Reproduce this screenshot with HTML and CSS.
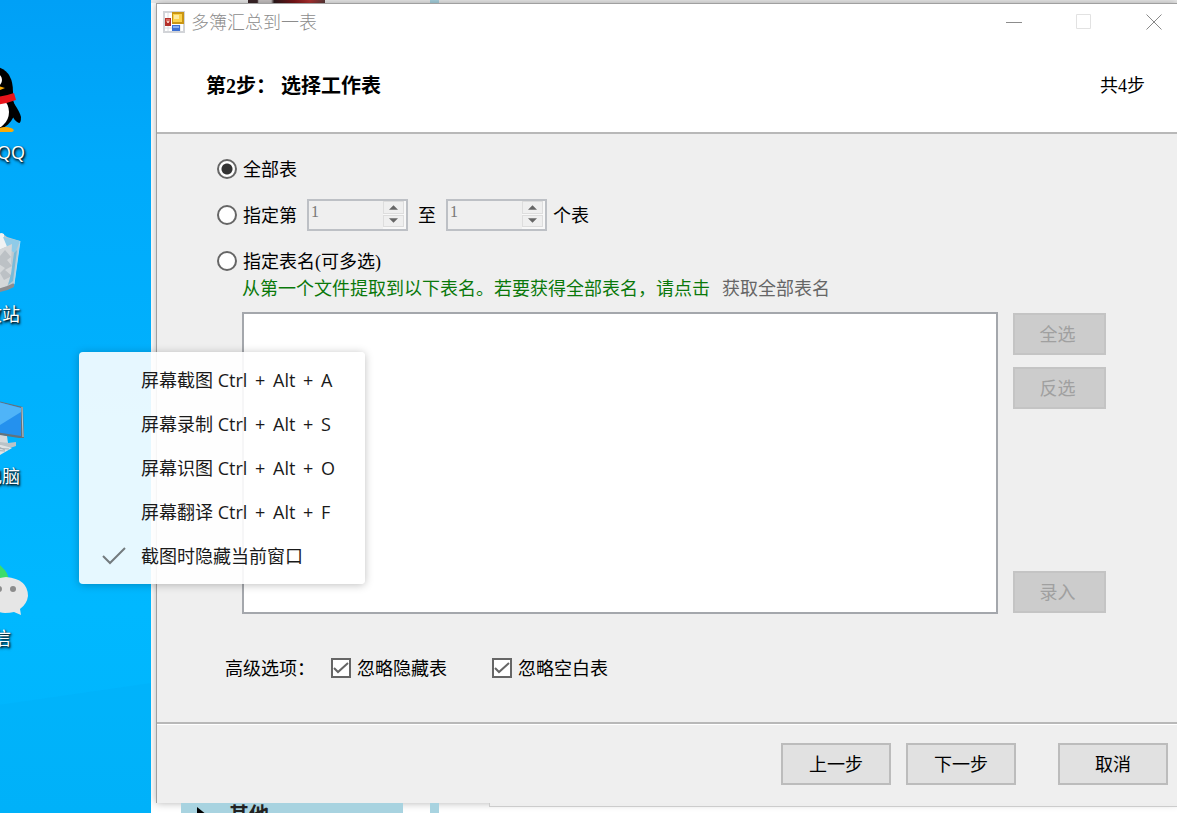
FILE: index.html
```html
<!DOCTYPE html>
<html lang="zh-CN">
<head>
    <meta charset="UTF-8">
    <meta name="viewport" content="width=device-width, initial-scale=1.0">
    <title>多簿汇总到一表</title>
    <link rel="stylesheet" href="styles.css">
</head>
<body>
    <div class="desktop">
        <aside class="icons">
            <svg class="beam" viewBox="0 0 151 120" preserveAspectRatio="none" aria-hidden="true">
                <path d="M0 20L151 0V120H0z" fill="#00a8f0" opacity=".22"/>
            </svg>
            <div class="icon-list">
                <div class="icon">
                    <svg viewBox="0 0 72 72">
                        <path d="M14 40L4 50Q1 58 4 60Q8 58 12 50z"/>
                        <path d="M56 38Q63 48 64 53Q64 59 62 59Q57 57 54 49z"/>
                        <ellipse cx="34" cy="45" rx="24" ry="22"/>
                        <path d="M12 34V24Q13 2 34 2Q56 3 56 28V42z"/>
                        <ellipse cx="33" cy="48" rx="19" ry="18" fill="#fff"/>
                        <path d="M11 31Q34 37 57 29L59 36Q35 45 9 38z" fill="#e8141b"/>
                        <ellipse cx="27" cy="16" rx="4" ry="6" fill="#fff"/>
                        <ellipse cx="40" cy="16" rx="5" ry="6" fill="#fff"/>
                        <circle cx="40" cy="17" r="2"/>
                        <path d="M20 24Q34 19 48 24Q36 30 20 24z" fill="#faab07"/>
                        <path d="M36 67Q46 61 54 64Q59 66 55 68H34zM12 68Q10 64 20 63L32 68z" fill="#faab07"/>
                    </svg>
                    <span class="icon-name">腾讯QQ</span>
                </div>
                <div class="icon">
                    <svg viewBox="0 0 72 72">
                        <path d="M10 15L26 8L34 12L45 7L50 11L63 15L57 60Q36 70 17 60z" fill="#bfc9cf"/>
                        <path d="M12 18L34 12L44 7L47 8V13L61 16L44 23L26 22z" fill="#f1f3f4"/>
                        <path d="M46 11L63 15L58 27L51 23z" fill="#8fcbe8"/>
                        <path d="M14 24L44 23L55 18L54 36L56 47L50 60L36 65L18 60z" fill="#d4d7d9"/>
                        <path d="M43 30L48 24L54 31L50 34L55 40L48 44L55 50L47 54L43 47L48 42L42 38z" fill="#bcc1c5"/>
                        <path d="M57 27L60 24L56 55L51 59L54 48z" fill="#79bbd8"/>
                        <path d="M17 60Q36 68 57 57V61Q40 71 17 63z" fill="#8d8d90"/>
                        <path d="M63 15L57 58" stroke="#a9dcf4" fill="none"/>
                    </svg>
                    <span class="icon-name">回收站</span>
                </div>
                <div class="icon">
                    <svg viewBox="0 0 72 72">
                        <path d="M32 53L43 52L51 55L59 54V58L47 62L32 60z" fill="#b9c3c8"/>
                        <path d="M42 46L50 48L51 55L42 54z" fill="#d5dadd"/>
                        <path d="M4 8L41 13L66 19L67 50L62 50L4 41z" fill="#64737c"/>
                        <path d="M4 9L41 14L64 20V48L4 39z" fill="#2491ee"/>
                        <path d="M4 9L41 14L64 20V24L38 40L4 36z" fill="#4fb4f8"/>
                        <path d="M65 19L66 49" stroke="#bdc8ce" fill="none"/>
                        <path d="M20 59L44 57L55 60L43 67L20 64z" fill="#dfe4e6"/>
                        <path d="M30 60L52 61M30 62L48 63M40 58L48 62" stroke="#a4afb5" fill="none"/>
                    </svg>
                    <span class="icon-name">此电脑</span>
                </div>
                <div class="icon">
                    <svg viewBox="0 0 72 72">
                        <ellipse cx="26" cy="32" rx="26" ry="22" fill="#3ddc6b"/>
                        <path d="M49 27Q71 29 71 46Q70 54 63 59L64 65L57 62Q53 63 48 63Q28 61 28 45Q29 29 49 27z" fill="#e6e6e6"/>
                        <circle cx="42" cy="39" r="3" fill="#8c8c8c"/>
                        <circle cx="56" cy="39" r="3" fill="#8c8c8c"/>
                    </svg>
                    <span class="icon-name">微信</span>
                </div>
            </div>
        </aside>

        <main class="workspace">
            <div class="sheet-top">
                <span class="sheet-photo"></span>
                <span class="sheet-bar"></span>
            </div>

            <form class="dialog">
                <div class="titlebar">
                    <svg class="app-icon" viewBox="0 0 22 22" aria-hidden="true">
                        <path d="M1 1h20v20H1z" fill="#fff" stroke="#d2d4d8" stroke-width="2"/>
                        <path d="M5 2v18M2 17h8M17 14v6" stroke="#dcdee2"/>
                        <path d="M2 7h6v8H2z" fill="#b3302a"/>
                        <path d="M3 8h4v3H3z" fill="#d9685c"/>
                        <path d="M4 10h2v2H4z" fill="#f6c1b8"/>
                        <path d="M9 1h12v12H9z" fill="#c99513"/>
                        <path d="M10 3h9v8h-9z" fill="#fbd24b"/>
                        <path d="M11 4h5v4h-5z" fill="#fdeaa0"/>
                        <path d="M9 14h8v6H9z" fill="#3c6fd3"/>
                        <path d="M10 15h6v2h-6z" fill="#86adf2"/>
                    </svg>
                    <span class="title">多簿汇总到一表</span>
                    <div class="window-controls">
                        <button type="button" aria-label="最小化"><svg viewBox="0 0 16 16"><path d="M0 8.5h16" stroke="#8c8c8c"/></svg></button>
                        <button type="button" aria-label="最大化" disabled><svg viewBox="0 0 16 16"><path d="M.5.5h14v14H.5z" stroke="#e2e2e2"/></svg></button>
                        <button type="button" aria-label="关闭"><svg viewBox="0 0 16 16"><path d="M.5.5l15 15M15.5.5l-15 15" stroke="#888"/></svg></button>
                    </div>
                </div>

                <div class="header">
                    <h1>第2步： 选择工作表</h1>
                    <span class="steps">共4步</span>
                </div>

                <div class="content">
                    <div class="row">
                        <input type="radio" name="range" id="rangeAll" checked>
                        <label for="rangeAll">全部表</label>
                    </div>
                    <div class="row">
                        <input type="radio" name="range" id="rangeIndex">
                        <label for="rangeIndex">指定第</label>
                        <span class="spinner">
                            <input type="text" value="1" aria-label="起始表" disabled>
                            <span class="spinner-buttons">
                                <button type="button" aria-label="增加" disabled><svg viewBox="0 0 8 4"><path d="M4 0l4 4H0z"/></svg></button>
                                <button type="button" aria-label="减少" disabled><svg viewBox="0 0 8 4"><path d="M0 0h8L4 4z"/></svg></button>
                            </span>
                        </span>
                        <span class="to">至</span>
                        <span class="spinner">
                            <input type="text" value="1" aria-label="结束表" disabled>
                            <span class="spinner-buttons">
                                <button type="button" aria-label="增加" disabled><svg viewBox="0 0 8 4"><path d="M4 0l4 4H0z"/></svg></button>
                                <button type="button" aria-label="减少" disabled><svg viewBox="0 0 8 4"><path d="M0 0h8L4 4z"/></svg></button>
                            </span>
                        </span>
                        <span class="unit">个表</span>
                    </div>
                    <div class="row">
                        <input type="radio" name="range" id="rangeName">
                        <label for="rangeName">指定表名(可多选)</label>
                    </div>
                    <p class="hint">从第一个文件提取到以下表名。若要获得全部表名，请点击<a href="#">获取全部表名</a></p>

                    <div class="names">
                        <select multiple class="name-list" aria-label="表名"></select>
                        <div class="name-actions">
                            <button type="button" class="btn" disabled>全选</button>
                            <button type="button" class="btn" disabled>反选</button>
                            <button type="button" class="btn enter-btn" disabled>录入</button>
                        </div>
                    </div>

                    <div class="row options">
                        <span class="options-title">高级选项：</span>
                        <input type="checkbox" id="skipHidden" checked>
                        <label for="skipHidden">忽略隐藏表</label>
                        <input type="checkbox" id="skipEmpty" checked>
                        <label for="skipEmpty">忽略空白表</label>
                    </div>
                </div>

                <div class="footer">
                    <button type="button" class="btn">上一步</button>
                    <button type="button" class="btn">下一步</button>
                    <button type="button" class="btn cancel-btn">取消</button>
                </div>
            </form>

            <div class="sheet-bottom">
                <div class="sheet-group"><span class="arrow"></span>其他</div>
                <span class="sheet-bar"></span>
                <span class="sheet-scroll"></span>
            </div>
        </main>

        <div class="menu">
            <button type="button">屏幕截图 <kbd>Ctrl</kbd> + <kbd>Alt</kbd> + <kbd>A</kbd></button>
            <button type="button">屏幕录制 <kbd>Ctrl</kbd> + <kbd>Alt</kbd> + <kbd>S</kbd></button>
            <button type="button">屏幕识图 <kbd>Ctrl</kbd> + <kbd>Alt</kbd> + <kbd>O</kbd></button>
            <button type="button">屏幕翻译 <kbd>Ctrl</kbd> + <kbd>Alt</kbd> + <kbd>F</kbd></button>
            <label><input type="checkbox" checked>截图时隐藏当前窗口</label>
        </div>
    </div>
</body>
</html>
```
FILE: styles.css
```css
* {
    margin: 0;
    padding: 0;
    box-sizing: border-box;
}

body {
    font-family: "Liberation Serif", "Noto Sans CJK SC", sans-serif;
    font-size: 18px;
    line-height: 24px;
    color: #000;
}

button,
input,
select {
    font: inherit;
    color: inherit;
}

.desktop {
    position: relative;
    display: grid;
    grid-template-columns: 151px 1fr;
    min-height: 100vh;
    overflow: hidden;
}

/* desktop icons */
.icons {
    position: relative;
    overflow: hidden;
    background: linear-gradient(#00a0f6, #00aafb 20%, #00b8ff 75%, #00b4fc);
}

.beam {
    position: absolute;
    left: 0;
    bottom: 0;
    width: 100%;
    height: 130px;
}

.icon-list {
    position: relative;
    display: flex;
    flex-direction: column;
    gap: 62px;
    width: 120px;
    margin-left: -67px;
    padding-top: 64px;
}

.icon {
    display: flex;
    flex-direction: column;
    align-items: center;
    gap: 4px;
}

.icon svg {
    width: 72px;
    height: 72px;
}

.icon-name {
    font-family: "Open Sans", "Noto Sans CJK SC", sans-serif;
    color: #fff;
    text-shadow: 1px 1px 2px #000, 1px 2px 3px rgba(0, 0, 0, 0.7);
}

/* window behind the dialog */
.workspace {
    display: flex;
    flex-direction: column;
    min-width: 0;
    background: #fff;
    box-shadow: 0 0 12px rgba(0, 0, 0, 0.5);
}

.sheet-top {
    display: flex;
    height: 3px;
    padding-left: 97px;
    background: #ebebeb;
}

.sheet-photo {
    width: 77px;
    margin-right: 105px;
    background: linear-gradient(90deg, #3a2528 12%, #c8c4c4 14% 30%, #2c1a1c 34%, #7c1418 60%, #b03030 80%, #5a3a3a);
}

.sheet-bar {
    width: 9px;
    background: #a8d3e0;
}

.sheet-bottom {
    display: flex;
    height: 10px;
    padding-left: 30px;
    overflow: hidden;
}

.sheet-group {
    display: flex;
    width: 222px;
    height: 24px;
    margin-right: 27px;
    padding-left: 16px;
    background: #a8d3e0;
    color: #222;
    font-size: 20px;
    font-weight: bold;
}

.arrow {
    width: 10px;
    height: 16px;
    margin: 4px 22px 0 0;
    background: #000;
    clip-path: polygon(0 0, 100% 50%, 0 100%);
}

.sheet-scroll {
    flex: 1;
    height: 4px;
    margin-left: 50px;
    background: #eee;
    border: solid #ccc;
    border-width: 0 0 1px 1px;
}

/* dialog */
.dialog {
    flex: 1;
    display: flex;
    flex-direction: column;
    margin-left: 5px;
    background: #efefef;
    border: solid #a0a0a0;
    border-width: 1px 0 0 1px;
    box-shadow: 0 0 8px rgba(0, 0, 0, 0.3);
}

.titlebar {
    display: flex;
    align-items: center;
    height: 36px;
    padding-left: 6px;
    background: #fff;
}

.app-icon {
    width: 22px;
    height: 22px;
    margin-right: 6px;
}

.title {
    padding-top: 2px;
    color: #8c8c8c;
    font-weight: 300;
}

.window-controls {
    display: flex;
    gap: 23px;
    margin-left: auto;
}

.window-controls button {
    display: flex;
    align-items: center;
    justify-content: center;
    width: 47px;
    height: 36px;
    background: none;
    border: none;
}

.window-controls svg {
    width: 16px;
    height: 16px;
    fill: none;
}

.header {
    display: flex;
    align-items: center;
    justify-content: space-between;
    height: 94px;
    padding: 0 32px 0 49px;
    background: #fff;
    border-bottom: 2px solid #b8b8b8;
}

h1 {
    font-size: 20px;
    font-weight: bold;
}

.content {
    flex: 1;
    display: flex;
    flex-direction: column;
    padding: 19px 71px 38px 60px;
}

.row {
    display: flex;
    align-items: center;
    height: 32px;
    margin-bottom: 14px;
}

.row input[type="radio"],
.row input[type="checkbox"] {
    appearance: none;
    flex: none;
    width: 20px;
    height: 20px;
    margin-right: 6px;
    background: #fff;
    border: 2px solid #666;
}

.row input[type="radio"] {
    border-radius: 50%;
}

.row input[type="radio"]:checked {
    background: radial-gradient(circle, #333 5px, #fff 6px);
}

.row input[type="checkbox"]:checked {
    background: #fff url("data:image/svg+xml,%3Csvg xmlns='http://www.w3.org/2000/svg' viewBox='0 0 16 16'%3E%3Cpath d='M1 8l4 4L15 3' fill='none' stroke='%23666' stroke-width='2'/%3E%3C/svg%3E");
}

.row label,
.to,
.unit,
.options-title {
    padding-top: 2px;
}

.spinner {
    display: flex;
    width: 101px;
    height: 32px;
    margin-left: 10px;
    border: 2px solid #bdc0c5;
}

.spinner input {
    flex: 1;
    min-width: 0;
    height: 22px;
    padding-left: 2px;
    background: none;
    border: none;
    color: #777;
    font-size: 16px;
}

.spinner-buttons {
    display: flex;
    flex-direction: column;
    gap: 1px;
    width: 23px;
    padding: 0 2px 2px 0;
    background: #f8f8f8;
}

.spinner-buttons button {
    flex: 1;
    display: flex;
    align-items: center;
    justify-content: center;
    background: #efefef;
    border: 1px solid #ddd;
}

.spinner-buttons svg {
    width: 9px;
    height: 5px;
    fill: #666;
}

.to {
    margin-left: 10px;
}

.unit {
    margin-left: 6px;
}

.row + .hint {
    margin-top: -14px;
}

.hint {
    padding-left: 25px;
    color: #0a780a;
}

.hint a {
    margin-left: 12px;
    color: #666;
    text-decoration: none;
}

.names {
    flex: 1;
    display: flex;
    gap: 15px;
    margin: 11px 0 38px 25px;
}

.name-list {
    flex: 1;
    min-width: 0;
    background: #fff;
    border: 2px solid #a4a7ac;
    border-radius: 0;
}

.name-actions {
    display: flex;
    flex-direction: column;
    gap: 12px;
    padding: 1px 0;
}

.btn {
    width: 110px;
    height: 42px;
    padding-top: 2px;
    background: #e1e1e1;
    border: 2px solid #bcbcbc;
}

.btn:disabled {
    width: 93px;
    padding-right: 4px;
    background: #ccc;
    border-color: #c4c4c4;
    color: #a0a0a0;
}

.enter-btn {
    margin-top: auto;
}

.options {
    margin-bottom: 0;
    padding-left: 8px;
}

.options-title {
    margin-right: 16px;
}

.options label {
    margin-right: 45px;
}

.footer {
    display: flex;
    justify-content: flex-end;
    gap: 15px;
    padding: 19px 9px 18px;
    border-top: 2px solid #b8b8b8;
    box-shadow: inset 0 1px #fff;
}

.cancel-btn {
    margin-left: 27px;
}

/* screenshot menu floating over everything */
.menu {
    position: absolute;
    left: 79px;
    top: 352px;
    width: 286px;
    padding: 6px 0;
    background: rgba(255, 255, 255, 0.9);
    border-radius: 4px;
    box-shadow: 0 1px 8px rgba(0, 0, 0, 0.25);
    font-family: "Open Sans", "Noto Sans CJK SC", sans-serif;
    color: #1a1a1a;
}

.menu button,
.menu label {
    width: 100%;
    height: 44px;
    background: none;
    border: none;
}

.menu button {
    display: block;
    padding-left: 62px;
    text-align: left;
}

.menu kbd {
    margin-right: 3px;
    font: inherit;
}

.menu kbd + kbd {
    margin-left: 3px;
}

.menu label {
    display: flex;
    align-items: center;
    padding-left: 22px;
}

.menu input {
    appearance: none;
    width: 26px;
    height: 26px;
    margin-right: 14px;
    background: url("data:image/svg+xml,%3Csvg xmlns='http://www.w3.org/2000/svg' viewBox='0 0 26 26'%3E%3Cpath d='M2 13l7 7L24 5' fill='none' stroke='%23737b7e' stroke-width='2'/%3E%3C/svg%3E");
}
```
